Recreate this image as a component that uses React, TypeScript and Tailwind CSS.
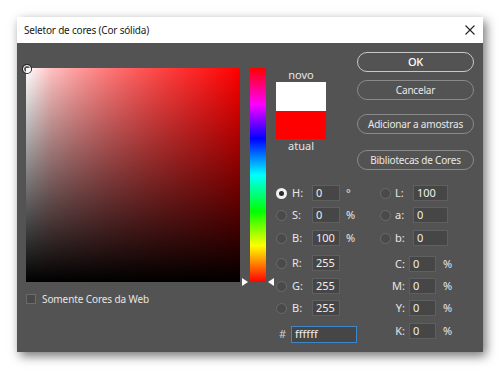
import React from "react";

const font = { fontFamily: '"Noto Sans", "Liberation Sans", sans-serif' };

const Radio = ({ checked = false }: { checked?: boolean }) =>
  checked ? (
    <span className="flex h-[11px] w-[11px] items-center justify-center rounded-full bg-[#f2f2f2]">
      <span className="h-[5px] w-[5px] rounded-full bg-[#2a2a2a]" />
    </span>
  ) : (
    <span className="h-[11px] w-[11px] rounded-full border border-[#6b6b6b] bg-[#4a4a4a]" />
  );

const Field = ({ value, width }: { value: string; width: string }) => (
  <div
    className={`flex h-4 items-center border border-[#5f5f5f] bg-[#464646] pl-[3px] text-[11px] text-[#f0f0f0] ${width}`}
  >
    {value}
  </div>
);

type Row = { label: string; value: string; unit?: string; checked?: boolean; mt: string };

const leftRows: Row[] = [
  { label: "H:", value: "0", unit: "°", checked: true, mt: "mt-0" },
  { label: "S:", value: "0", unit: "%", mt: "mt-[6px]" },
  { label: "B:", value: "100", unit: "%", mt: "mt-[7px]" },
  { label: "R:", value: "255", mt: "mt-[9px]" },
  { label: "G:", value: "255", mt: "mt-[7px]" },
  { label: "B:", value: "255", mt: "mt-[6px]" },
];

const labRows: Row[] = [
  { label: "L:", value: "100", mt: "mt-0" },
  { label: "a:", value: "0", mt: "mt-[6px]" },
  { label: "b:", value: "0", mt: "mt-[7px]" },
];

const cmykRows: Row[] = [
  { label: "C:", value: "0", mt: "mt-[10px]" },
  { label: "M:", value: "0", mt: "mt-[6px]" },
  { label: "Y:", value: "0", mt: "mt-[6px]" },
  { label: "K:", value: "0", mt: "mt-[7px]" },
];

const buttons = [
  { text: "OK", mt: "mt-0", strong: true },
  { text: "Cancelar", mt: "mt-[8px]" },
  { text: "Adicionar a amostras", mt: "mt-[14px]" },
  { text: "Bibliotecas de Cores", mt: "mt-[16px]" },
];

export default function App() {
  return (
    <div className="h-[370px] w-[500px] bg-white pl-[17px] pt-[17px]" style={font}>
      <div className="flex h-[335px] w-[466px] flex-col shadow-[3px_4px_10px_rgba(0,0,0,0.55)]">
        <div className="flex h-[26px] items-center justify-between bg-white pl-[7px] pr-[8px]">
          <span className="text-[10px] tracking-[-0.2px] text-[#1a1a1a]">Seletor de cores (Cor sólida)</span>
          <svg width="10" height="10" viewBox="0 0 10 10">
            <path d="M0.5 0.5 L9.5 9.5 M9.5 0.5 L0.5 9.5" stroke="#222" strokeWidth="1.1" />
          </svg>
        </div>
        <div className="flex flex-1 bg-[#535353] pl-[9px] text-[#e6e6e6]">
          <div className="flex flex-col pt-[25px]">
            <div
              className="relative h-[214px] w-[214px]"
              style={{
                background:
                  "linear-gradient(to bottom, rgba(0,0,0,0), #000), linear-gradient(to right, #fff, 35%, #f00)",
              }}
            >
              <span className="absolute -left-[3px] -top-[3px] h-[8px] w-[8px] rounded-full border-[1.5px] border-white shadow-[0_0_0_1px_#222]" />
            </div>
            <div className="mt-[12px] flex items-center">
              <span className="h-[10px] w-[10px] border border-[#6b6b6b] bg-[#484848]" />
              <span className="ml-[6px] text-[10px] leading-[10px] tracking-[-0.1px]">Somente Cores da Web</span>
            </div>
          </div>

          <div
            className="relative ml-[10px] mt-[25px] h-[214px] w-[16px]"
            style={{
              background:
                "linear-gradient(to bottom, #f00, #f0f 17%, #00f 33%, #0ff 50%, #0f0 67%, #ff0 83%, #f00)",
            }}
          >
            <svg className="absolute -left-[8px] bottom-[-4px]" width="6" height="8" viewBox="0 0 6 8">
              <path d="M0 0 L6 4 L0 8 Z" fill="#fff" />
            </svg>
            <svg className="absolute -right-[8px] bottom-[-4px]" width="6" height="8" viewBox="0 0 6 8">
              <path d="M6 0 L0 4 L6 8 Z" fill="#fff" />
            </svg>
          </div>

          <div className="ml-[10px] flex flex-col pt-[9px]">
            <div className="flex items-start">
              <div className="mt-[16px] flex w-[50px] flex-col items-center">
                <span className="text-[11px] leading-[14px]">novo</span>
                <div className="flex h-[57px] w-[50px] flex-col">
                  <div className="h-[29px] bg-white" />
                  <div className="flex-1 bg-[#ff0000]" />
                </div>
                <span className="text-[11px] leading-[14px]">atual</span>
              </div>
              <div className="ml-[31px] flex w-[117px] flex-col">
                {buttons.map((b) => (
                  <div
                    key={b.text}
                    className={`flex h-[20px] items-center justify-center rounded-full tracking-[-0.2px] ${b.mt} ${
                      b.strong
                        ? "border-[1.5px] border-[#c8c8c8] text-[11px] font-medium text-white"
                        : "border border-[#8a8a8a] text-[10px] text-[#e8e8e8]"
                    }`}
                  >
                    {b.text}
                  </div>
                ))}
              </div>
            </div>

            <div className="mt-[15px] flex">
              <div className="flex w-[104px] flex-col">
                {leftRows.map((r, i) => (
                  <div key={i} className={`flex h-4 items-center ${r.mt}`}>
                    <Radio checked={r.checked} />
                    <span className="ml-[5px] w-[20px] text-[11px]">{r.label}</span>
                    <Field value={r.value} width="w-[28px]" />
                    {r.unit && <span className="ml-[6px] text-[11px]">{r.unit}</span>}
                  </div>
                ))}
                <div className="mt-[10px] flex h-[17px] items-center">
                  <span className="w-[15px] pl-[3px] text-[11px] text-[#cfcfcf]">#</span>
                  <div className="flex h-[17px] w-[66px] items-center border border-[#3d87c9] bg-[#464646] pl-[3px] text-[11px] text-[#f0f0f0]">
                    ffffff
                  </div>
                </div>
              </div>
              <div className="flex flex-col">
                {labRows.map((r, i) => (
                  <div key={i} className={`flex h-4 items-center ${r.mt}`}>
                    <Radio />
                    <span className="ml-[4px] w-[18px] text-[11px]">{r.label}</span>
                    <Field value={r.value} width="w-[35px]" />
                  </div>
                ))}
                {cmykRows.map((r, i) => (
                  <div key={i} className={`flex h-4 items-center ${r.mt}`}>
                    <span className="w-[29px] pr-[4px] text-right text-[11px]">{r.label}</span>
                    <Field value={r.value} width="w-[27px]" />
                    <span className="ml-[7px] text-[11px]">%</span>
                  </div>
                ))}
              </div>
            </div>
          </div>
        </div>
      </div>
    </div>
  );
}
